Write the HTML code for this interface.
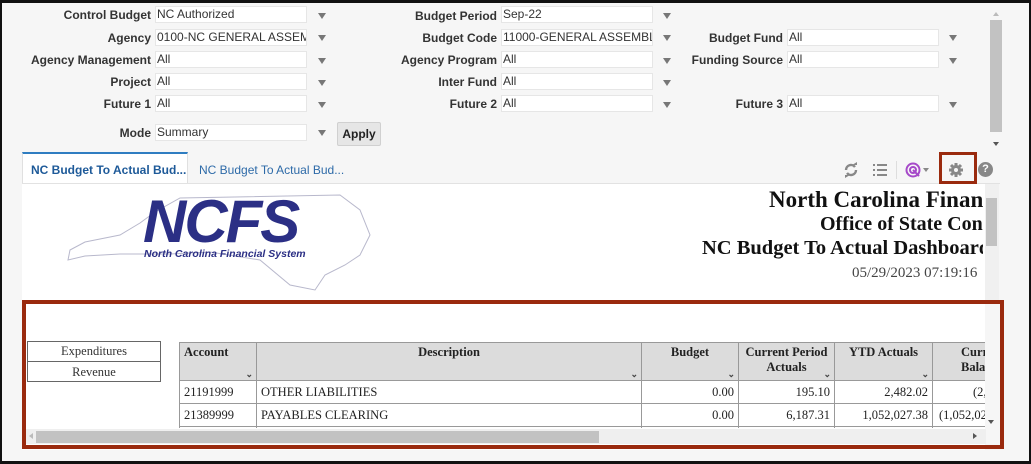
<!DOCTYPE html>
<html><head><meta charset="utf-8"><style>
*{box-sizing:border-box;margin:0;padding:0}
body{width:1031px;height:464px;overflow:hidden;background:#fff;position:relative;font-family:"Liberation Sans",Arial,sans-serif}
.frame{position:absolute;left:0;top:0;width:1031px;height:464px;border:2px solid #111;border-top-width:3px;border-bottom-width:3px;background:#f6f6f6}
.a{position:absolute}
.lbl{position:absolute;font-size:12px;font-weight:bold;color:#333;text-align:right;white-space:nowrap}
.in{position:absolute;height:17px;width:152px;background:#fff;border:1px solid #e6e6e6;font-size:12px;color:#333;padding-left:1px;line-height:15px;white-space:nowrap;overflow:hidden}
.ar{position:absolute;width:0;height:0;border-left:4px solid transparent;border-right:4px solid transparent;border-top:6px solid #777}
.serif{font-family:"Liberation Serif",serif}
table{border-collapse:collapse;font-family:"Liberation Serif",serif;font-size:12.5px;color:#222}
td,th{border:1px solid #999;padding:0 4px}
th{background:#dcdcdc;vertical-align:top;font-weight:bold;position:relative;padding-top:2px}
th .c{position:absolute;right:3px;bottom:0;font-size:9px;color:#444}
</style></head><body><div class="frame"></div>

<!-- form -->
<div class="lbl" style="right:880px;top:8px">Control Budget</div><div class="in" style="left:155px;top:6px">NC Authorized</div><div class="ar" style="left:318px;top:13px"></div>
<div class="lbl" style="right:880px;top:31px">Agency</div><div class="in" style="left:155px;top:29px">0100-NC GENERAL ASSEMI</div><div class="ar" style="left:318px;top:35px"></div>
<div class="lbl" style="right:880px;top:53px">Agency Management</div><div class="in" style="left:155px;top:51px">All</div><div class="ar" style="left:318px;top:58px"></div>
<div class="lbl" style="right:880px;top:75px">Project</div><div class="in" style="left:155px;top:73px">All</div><div class="ar" style="left:318px;top:80px"></div>
<div class="lbl" style="right:880px;top:97px">Future 1</div><div class="in" style="left:155px;top:95px">All</div><div class="ar" style="left:318px;top:102px"></div>
<div class="lbl" style="right:880px;top:126px">Mode</div><div class="in" style="left:155px;top:124px">Summary</div><div class="ar" style="left:318px;top:130px"></div>
<div class="a" style="left:337px;top:122px;width:44px;height:24px;background:#e6e6e6;border:1px solid #d0d0d0;border-radius:2px;font-size:12px;font-weight:bold;color:#222;text-align:center;line-height:22px">Apply</div>

<div class="lbl" style="right:534px;top:9px">Budget Period</div><div class="in" style="left:501px;top:6px">Sep-22</div><div class="ar" style="left:663px;top:13px"></div>
<div class="lbl" style="right:534px;top:31px">Budget Code</div><div class="in" style="left:501px;top:29px">11000-GENERAL ASSEMBLY</div><div class="ar" style="left:663px;top:35px"></div>
<div class="lbl" style="right:534px;top:53px">Agency Program</div><div class="in" style="left:501px;top:51px">All</div><div class="ar" style="left:663px;top:58px"></div>
<div class="lbl" style="right:534px;top:75px">Inter Fund</div><div class="in" style="left:501px;top:73px">All</div><div class="ar" style="left:663px;top:80px"></div>
<div class="lbl" style="right:534px;top:97px">Future 2</div><div class="in" style="left:501px;top:95px">All</div><div class="ar" style="left:663px;top:102px"></div>

<div class="lbl" style="right:248px;top:31px">Budget Fund</div><div class="in" style="left:787px;top:29px">All</div><div class="ar" style="left:949px;top:35px"></div>
<div class="lbl" style="right:248px;top:53px">Funding Source</div><div class="in" style="left:787px;top:51px">All</div><div class="ar" style="left:949px;top:58px"></div>
<div class="lbl" style="right:248px;top:97px">Future 3</div><div class="in" style="left:787px;top:95px">All</div><div class="ar" style="left:949px;top:102px"></div>

<!-- outer vscroll -->
<div class="a" style="left:990px;top:20px;width:12px;height:112px;background:#c2c2c2"></div>
<div class="a" style="left:993px;top:12px;border-left:3px solid transparent;border-right:3px solid transparent;border-bottom:4px solid #bbb"></div>
<div class="a" style="left:993px;top:142px;border-left:3px solid transparent;border-right:3px solid transparent;border-top:4px solid #555"></div>

<!-- tabs -->
<div class="a" style="left:22px;top:152px;width:166px;height:32px;background:#fff;border-top:2px solid #2f7dc1;border-left:1px solid #e0e0e0;border-right:1px solid #e0e0e0;font-size:12px;font-weight:bold;color:#1e5a99;padding:9px 0 0 8px">NC Budget To Actual Bud...</div>
<div class="a" style="left:199px;top:163px;font-size:12px;color:#2d6aa8">NC Budget To Actual Bud...</div>
<div class="a" style="left:22px;top:183px;width:978px;height:1px;background:#e2e2e2"></div>

<!-- toolbar -->
<svg class="a" style="left:843px;top:162px" width="16" height="16" viewBox="0 0 16 16"><path d="M3 8a5 5 0 0 1 9-3M13 8a5 5 0 0 1-9 3" stroke="#888" stroke-width="2.4" fill="none"/><path d="M9 3h5V0z M7 13H2v3z" fill="#888"/></svg>
<svg class="a" style="left:872px;top:162px" width="16" height="16" viewBox="0 0 16 16" fill="#888"><rect x="1" y="2" width="2" height="2"/><rect x="5" y="2" width="10" height="2"/><rect x="1" y="7" width="2" height="2"/><rect x="5" y="7" width="10" height="2"/><rect x="1" y="12" width="2" height="2"/><rect x="5" y="12" width="10" height="2"/></svg>
<div class="a" style="left:896px;top:161px;width:1px;height:18px;background:#ddd"></div>
<svg class="a" style="left:905px;top:162px" width="26" height="16" viewBox="0 0 26 16"><circle cx="8" cy="8" r="6.5" stroke="#a64ac9" stroke-width="2" fill="none"/><circle cx="8" cy="8" r="3" stroke="#a64ac9" stroke-width="2" fill="none"/><path d="M8 8l6 6" stroke="#a64ac9" stroke-width="2"/><path d="M18 6h6l-3 4z" fill="#888"/></svg>
<div class="a" style="left:939px;top:152px;width:38px;height:32px;border:3px solid #9a2a0e"></div>
<svg class="a" style="left:948px;top:162px" width="16" height="16" viewBox="0 0 16 16"><g stroke="#888" stroke-width="3"><path d="M8 1v14M1 8h14M3 3l10 10M13 3L3 13"/></g><circle cx="8" cy="8" r="5" fill="#888"/><circle cx="8" cy="8" r="2" fill="#f6f6f6"/></svg>
<div class="a" style="left:978px;top:162px;width:15px;height:15px;border-radius:50%;background:#888;color:#fff;font-size:11px;font-weight:bold;text-align:center;line-height:15px">?</div>

<!-- content -->
<div class="a" style="left:22px;top:184px;width:963px;height:266px;background:#fff"></div>
<div class="a" style="left:985px;top:184px;width:14px;height:120px;background:#f0f0f0"></div>
<div class="a" style="left:986px;top:198px;width:11px;height:48px;background:#c2c2c2"></div>

<!-- logo -->
<svg class="a" style="left:60px;top:190px" width="320" height="110" viewBox="0 0 320 110"><path d="M10 60 L25 52 L60 45 L80 33 L95 22 L120 8 L280 5 L300 20 L310 45 L300 65 L285 75 L265 85 L255 100 L230 95 L200 70 L150 62 L110 64 L60 64 L25 66 L8 70 Z" fill="none" stroke="#b8b8cc" stroke-width="1"/></svg>
<div class="a" style="left:143px;top:190px;font-size:60px;font-weight:bold;font-style:italic;color:#2b2f85;letter-spacing:-2px;line-height:64px">NCFS</div>
<div class="a" style="left:144px;top:248px;font-size:10.5px;font-weight:bold;font-style:italic;color:#2b2f85;white-space:nowrap">North Carolina Financial System</div>

<div class="a serif" style="left:769px;top:187px;font-size:23px;font-weight:bold;color:#111;white-space:nowrap;width:214px;overflow:hidden">North Carolina Financial</div>
<div class="a serif" style="left:820px;top:213px;font-size:20px;font-weight:bold;color:#111;white-space:nowrap;width:163px;overflow:hidden">Office of State Controller</div>
<div class="a serif" style="left:702px;top:237px;font-size:20.5px;font-weight:bold;color:#111;white-space:nowrap;width:281px;overflow:hidden">NC Budget To Actual Dashboard</div>
<div class="a serif" style="left:852px;top:265px;font-size:15px;color:#444;white-space:nowrap">05/29/2023 07:19:16</div>

<!-- red box -->
<div class="a" style="left:22px;top:300px;width:982px;height:149px;border:4px solid #9a2a0e"></div>
<div class="a serif" style="left:27px;top:341px;width:134px;height:41px;border:1px solid #666;font-size:12.5px;color:#333;text-align:center">
<div style="height:20px;line-height:19px;border-bottom:1px solid #666">Expenditures</div><div style="line-height:20px">Revenue</div></div>

<div class="a" style="left:179px;top:342px;width:806px;height:86px;overflow:hidden">
<table style="width:870px;table-layout:fixed">
<colgroup><col style="width:77px"><col style="width:385px"><col style="width:97px"><col style="width:96px"><col style="width:98px"><col style="width:117px"></colgroup>
<tr style="height:38px"><th style="text-align:left">Account<span class="c">⌄</span></th><th>Description<span class="c">⌄</span></th><th>Budget<span class="c">⌄</span></th><th>Current Period<br>Actuals<span class="c">⌄</span></th><th>YTD Actuals<span class="c">⌄</span></th><th style="text-align:left;padding-left:28px">Current<br>Balance</th></tr>
<tr style="height:23px"><td>21191999</td><td>OTHER LIABILITIES</td><td style="text-align:right">0.00</td><td style="text-align:right">195.10</td><td style="text-align:right">2,482.02</td><td style="padding-left:40px">(2,482.02)</td></tr>
<tr style="height:23px"><td>21389999</td><td>PAYABLES CLEARING</td><td style="text-align:right">0.00</td><td style="text-align:right">6,187.31</td><td style="text-align:right">1,052,027.38</td><td style="padding-left:6px">(1,052,027.38)</td></tr>
<tr style="height:23px"><td></td><td></td><td></td><td></td><td></td><td></td></tr>
</table></div>
<div class="a" style="left:26px;top:429px;width:960px;height:15px;background:#efefef"></div>
<div class="a" style="left:36px;top:431px;width:563px;height:12px;background:#c2c2c2"></div>
<div class="a" style="left:973px;top:433px;border-top:3px solid transparent;border-bottom:3px solid transparent;border-left:4px solid #555"></div>
<div class="a" style="left:29px;top:433px;border-top:3px solid transparent;border-bottom:3px solid transparent;border-right:4px solid #bbb"></div>
<div class="a" style="left:988px;top:420px;border-left:3px solid transparent;border-right:3px solid transparent;border-top:4px solid #555"></div>
</body></html>
